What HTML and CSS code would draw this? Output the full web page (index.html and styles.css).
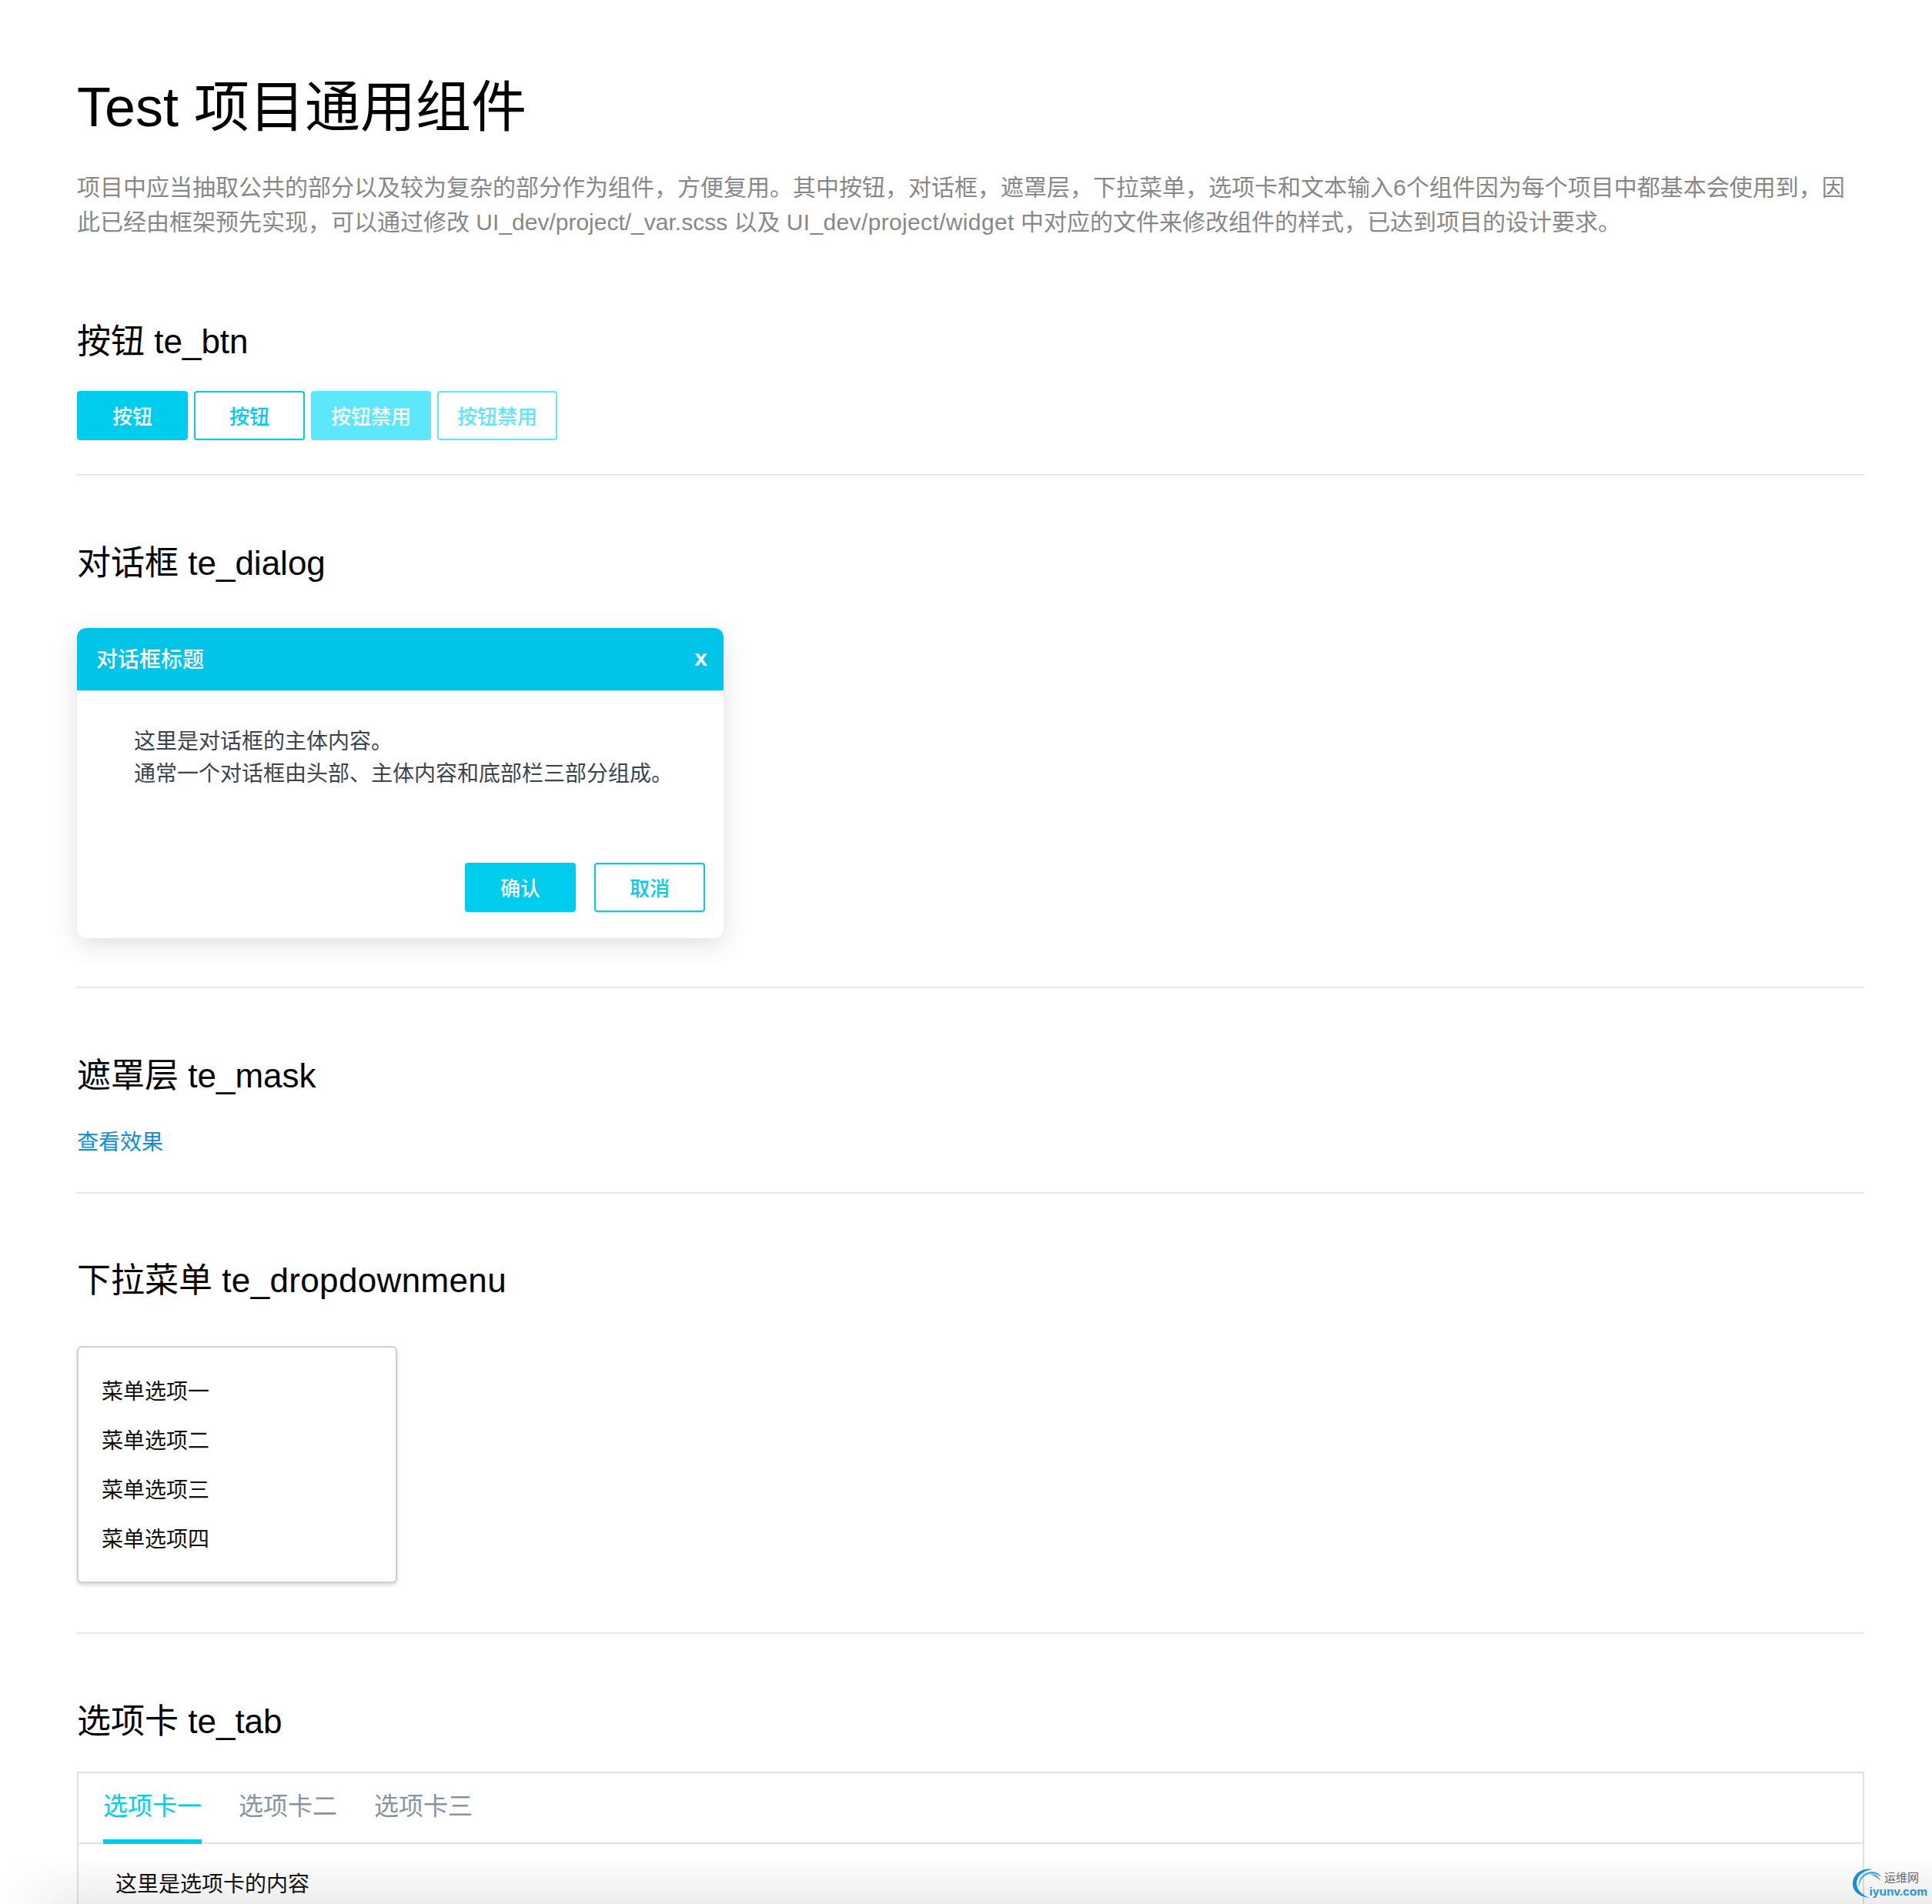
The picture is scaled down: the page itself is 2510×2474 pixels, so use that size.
FILE: index.html
```html
<!DOCTYPE html>
<html lang="zh">
<head>
<meta charset="utf-8">
<title>Test 项目通用组件</title>
<link rel="stylesheet" href="styles.css">
</head>
<body>
<main class="page">
  <h1 class="title">Test 项目通用组件</h1>
  <p class="intro">项目中应当抽取公共的部分以及较为复杂的部分作为组件，方便复用。其中按钮，对话框，遮罩层，下拉菜单，选项卡和文本输入6个组件因为每个项目中都基本会使用到，因<br>此已经由框架预先实现，可以通过修改 UI_dev/project/_var.scss 以及 <span class="latin-wide">UI_dev/project/widget</span> 中对应的文件来修改组件的样式，已达到项目的设计要求。</p>

  <section class="section section-btn">
    <h2 class="heading">按钮 te_btn</h2>
    <div class="btn-row">
      <a class="btn btn-solid">按钮</a>
      <a class="btn btn-line">按钮</a>
      <a class="btn btn-solid btn-wide is-disabled">按钮禁用</a>
      <a class="btn btn-line btn-wide is-disabled">按钮禁用</a>
    </div>
  </section>

  <section class="section section-dialog">
    <h2 class="heading">对话框 te_dialog</h2>
    <div class="dialog">
      <header class="dialog-head"><span>对话框标题</span><span class="dialog-close">x</span></header>
      <div class="dialog-body">这里是对话框的主体内容。<br>通常一个对话框由头部、主体内容和底部栏三部分组成。</div>
      <footer class="dialog-foot">
        <a class="btn btn-solid">确认</a>
        <a class="btn btn-line">取消</a>
      </footer>
    </div>
  </section>

  <section class="section section-mask">
    <h2 class="heading">遮罩层 te_mask</h2>
    <a class="link">查看效果</a>
  </section>

  <section class="section section-menu">
    <h2 class="heading">下拉菜单 <span class="latin-wide">te_dropdownmenu</span></h2>
    <ul class="menu">
      <li>菜单选项一</li>
      <li>菜单选项二</li>
      <li>菜单选项三</li>
      <li>菜单选项四</li>
    </ul>
  </section>

  <section class="section section-tab">
    <h2 class="heading">选项卡 te_tab</h2>
    <div class="tabs">
      <nav class="tab-bar">
        <a class="tab is-active">选项卡一</a>
        <a class="tab">选项卡二</a>
        <a class="tab">选项卡三</a>
      </nav>
      <div class="tab-body">这里是选项卡的内容</div>
    </div>
  </section>
</main>
<div class="fade"></div>
<div class="watermark">
  <svg class="wm-logo" viewBox="0 0 40 40" width="40" height="40">
    <path d="M27 2 C12 -1 1 9 1 21 C1 31 11 38 23 39 C14 36 6 29 6 20 C6 11 15 3 27 2 Z" fill="#1590d8"/>
    <path d="M9 25 C7 13 17 4 27 5 C32 5 36 8 38 12 C33 8 27 7 22 8 C15 10 10 16 9 25 Z" fill="#3fb0ea"/>
    <path d="M24 9 C30 8 35 11 37 17 C33 12 29 10 24 9 Z" fill="#5f7480"/>
  </svg>
  <div class="wm-text"><span class="wm-cn">运维网</span><span class="wm-en">iyunv.com</span></div>
</div>
</body>
</html>
```

FILE: styles.css
```css
* { box-sizing: border-box; }
html, body { margin: 0; padding: 0; background: #fff; }
body {
  position: relative;
  width: 2510px;
  height: 2474px;
  overflow: hidden;
  font-family: "Liberation Sans", "Noto Sans CJK SC", sans-serif;
  color: #000;
}
.page { padding: 0 88px 0 100px; }
.title {
  margin: 97px 0 0;
  font-size: 72px;
  line-height: 84px;
  font-weight: 400;
  color: #000;
}
.intro {
  margin: 40px 0 0;
  font-size: 30px;
  line-height: 45px;
  color: #888;
}
.latin-wide { letter-spacing: .35px; }
.section { border-bottom: 2px solid #e6e6e6; }
.section-btn { margin-top: 103px; padding-bottom: 44px; }
.section-dialog { margin-top: 84px; padding-bottom: 63px; }
.section-mask { margin-top: 84px; padding-bottom: 44px; }
.section-menu { margin-top: 83px; padding-bottom: 64px; }
.section-tab { margin-top: 84px; border-bottom: 0; }
.heading {
  margin: 0;
  font-size: 44px;
  line-height: 60px;
  font-weight: 400;
  color: #000;
}
.btn-row { display: flex; gap: 8px; margin-top: 34px; }
.btn {
  display: flex;
  align-items: center;
  justify-content: center;
  width: 144px;
  height: 64px;
  padding-bottom: 2px;
  border-radius: 4px;
  border: 2px solid #00cdee;
  font-size: 26px;
  font-weight: 500;
}
.btn-solid { background: #00cdee; color: #fff; }
.btn-line { background: #fff; color: #00cdee; }
.btn-wide { width: 156px; }
.is-disabled.btn-solid { background: #5ce7fa; border-color: #5ce7fa; }
.is-disabled.btn-line { color: #5ce7fa; border-color: #5ce7fa; }
.dialog {
  width: 840px;
  height: 403px;
  margin-top: 54px;
  display: flex;
  flex-direction: column;
  border-radius: 12px;
  background: #fff;
  box-shadow: 0 8px 32px rgba(0, 0, 0, .13);
  overflow: hidden;
}
.dialog-head {
  display: flex;
  justify-content: space-between;
  align-items: center;
  height: 81px;
  padding: 0 21px 3px 25px;
  background: #00c4e8;
  color: #fff;
  font-size: 28px;
  font-weight: 500;
}
.dialog-close { font-weight: 700; font-size: 30px; }
.dialog-body {
  flex: 1;
  padding: 46px 40px 0 74px;
  font-size: 28px;
  line-height: 42px;
  color: #3c4350;
}
.dialog-foot { display: flex; justify-content: flex-end; gap: 24px; padding: 0 24px 34px; }
.link {
  display: block;
  margin-top: 37px;
  font-size: 28px;
  line-height: 40px;
  color: #0b8fdc;
}
.menu {
  width: 416px;
  height: 308px;
  margin: 55px 0 0;
  padding: 26px 0 0 30px;
  list-style: none;
  border: 2px solid #cfcfcf;
  border-radius: 6px;
  background: #fff;
  box-shadow: 0 3px 5px rgba(0, 0, 0, .15);
  font-size: 28px;
}
.menu li { line-height: 64px; height: 64px; color: #111; }
.tabs {
  margin-top: 35px;
  height: 300px;
  border: 2px solid #dfe2e5;
}
.tab-bar {
  display: flex;
  gap: 48px;
  height: 92px;
  padding-left: 32px;
  border-bottom: 2px solid #dfe2e5;
}
.tab {
  height: 92px;
  font-size: 32px;
  line-height: 86px;
  color: #8a93a0;
}
.tab.is-active { color: #00cdee; border-bottom: 6px solid #00cdee; }
.tab-body {
  padding: 33px 0 0 48px;
  font-size: 28px;
  line-height: 40px;
  color: #111;
}
.fade {
  position: absolute;
  left: 0;
  right: 0;
  bottom: 0;
  height: 62px;
  background: linear-gradient(to bottom, rgba(0, 0, 0, 0), rgba(0, 0, 0, .075));
  -webkit-mask-image: linear-gradient(to right, transparent 0, #000 120px);
  mask-image: linear-gradient(to right, transparent 0, #000 120px);
  pointer-events: none;
}
.watermark {
  position: absolute;
  right: 6px;
  bottom: 7px;
  display: flex;
  align-items: flex-end;
}
.wm-logo { display: block; }
.wm-text { display: flex; flex-direction: column; align-items: flex-end; margin-left: -18px; }
.wm-cn { font-size: 15px; line-height: 18px; color: #666; padding-right: 11px; }
.wm-en { font-size: 15.5px; line-height: 18px; font-weight: 700; color: #1b93d6; }
```
